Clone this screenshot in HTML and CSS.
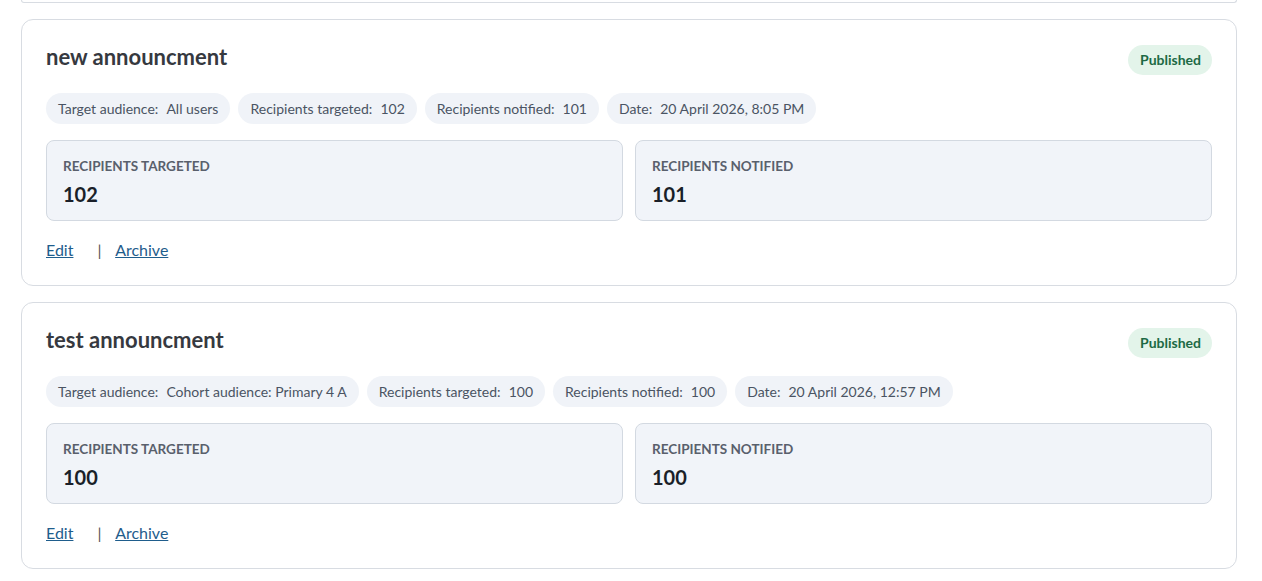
FILE: index.html
```html
<!DOCTYPE html>
<html lang="en">

<head>
    <meta charset="UTF-8">
    <meta name="viewport" content="width=device-width, initial-scale=1.0">
    <title>Announcements</title>
    <link rel="stylesheet" href="styles.css">
</head>

<body>
    <div class="list">
        <div class="card card-prev"></div>

        <div class="card">
            <div class="card-head">
                <h2>new announcment</h2>
                <span class="badge">Published</span>
            </div>
            <div class="chips">
                <span class="chip">Target audience: <b>All users</b></span>
                <span class="chip">Recipients targeted: <b>102</b></span>
                <span class="chip">Recipients notified: <b>101</b></span>
                <span class="chip">Date: <b>20 April 2026, 8:05 PM</b></span>
            </div>
            <div class="stats">
                <div class="stat">
                    <div class="stat-label">Recipients targeted</div>
                    <div class="stat-value">102</div>
                </div>
                <div class="stat">
                    <div class="stat-label">Recipients notified</div>
                    <div class="stat-value">101</div>
                </div>
            </div>
            <div class="actions">
                <a href="#">Edit</a>
                <span class="sep">|</span>
                <a href="#">Archive</a>
            </div>
        </div>

        <div class="card">
            <div class="card-head">
                <h2>test announcment</h2>
                <span class="badge">Published</span>
            </div>
            <div class="chips">
                <span class="chip">Target audience: <b>Cohort audience: Primary 4 A</b></span>
                <span class="chip">Recipients targeted: <b>100</b></span>
                <span class="chip">Recipients notified: <b>100</b></span>
                <span class="chip">Date: <b>20 April 2026, 12:57 PM</b></span>
            </div>
            <div class="stats">
                <div class="stat">
                    <div class="stat-label">Recipients targeted</div>
                    <div class="stat-value">100</div>
                </div>
                <div class="stat">
                    <div class="stat-label">Recipients notified</div>
                    <div class="stat-value">100</div>
                </div>
            </div>
            <div class="actions">
                <a href="#">Edit</a>
                <span class="sep">|</span>
                <a href="#">Archive</a>
            </div>
        </div>
    </div>
</body>

</html>
```

FILE: styles.css
```css
body {
    font-family: Lato, "Open Sans", sans-serif;
    margin: 0;
    padding: 0;
    background: #fff;
    color: #2d3139;
}

.list {
    display: flex;
    flex-direction: column;
    gap: 16px;
    width: 1216px;
    padding-left: 21px;
}

.card {
    background: #fff;
    border: 1px solid #d8dce2;
    border-radius: 12px;
    padding: 24px 24px 25px;
}

/* tail end of the card above, scrolled out of view */
.card-prev {
    height: 2px;
    padding: 0;
    border-top: none;
    border-radius: 0 0 12px 12px;
}

.card-head {
    display: flex;
    justify-content: space-between;
    align-items: flex-start;
}

.card-head h2 {
    margin: 0;
    font-size: 22px;
    line-height: 26px;
    font-weight: 700;
    color: #36393f;
}

.badge {
    margin-top: 1px;
    height: 30px;
    line-height: 30px;
    padding: 0 11px 0 12px;
    border-radius: 15px;
    background: #e3f4ea;
    color: #1d6a45;
    font-size: 14px;
    font-weight: 700;
}

.chips {
    display: flex;
    flex-wrap: wrap;
    gap: 8px;
    margin-top: 18px;
}

.chip {
    padding: 6px 12px;
    line-height: 19px;
    font-size: 14px;
    color: #4a5463;
    background: #f0f3f8;
    border-radius: 16px;
}

.chip b {
    font-weight: 400;
    margin-left: 4.5px;
}

.stats {
    display: grid;
    grid-template-columns: 1fr 1fr;
    gap: 12px;
    margin-top: 16px;
}

.stat {
    background: #f1f4f9;
    border: 1px solid #d3d9e1;
    border-radius: 8px;
    padding: 16px 16px 14px;
}

.stat-label {
    font-size: 13.5px;
    line-height: 18px;
    font-weight: 700;
    text-transform: uppercase;
    color: #59606c;
}

.stat-value {
    margin-top: 7px;
    font-size: 20px;
    line-height: 24px;
    font-weight: 700;
    color: #1a1f29;
}

.actions {
    margin-top: 19px;
    font-size: 16px;
    line-height: 20px;
}

.actions a {
    color: #1f5d8c;
    text-decoration: underline;
}

.sep {
    color: #555;
    margin: 0 10px 0 20px;
}
```
